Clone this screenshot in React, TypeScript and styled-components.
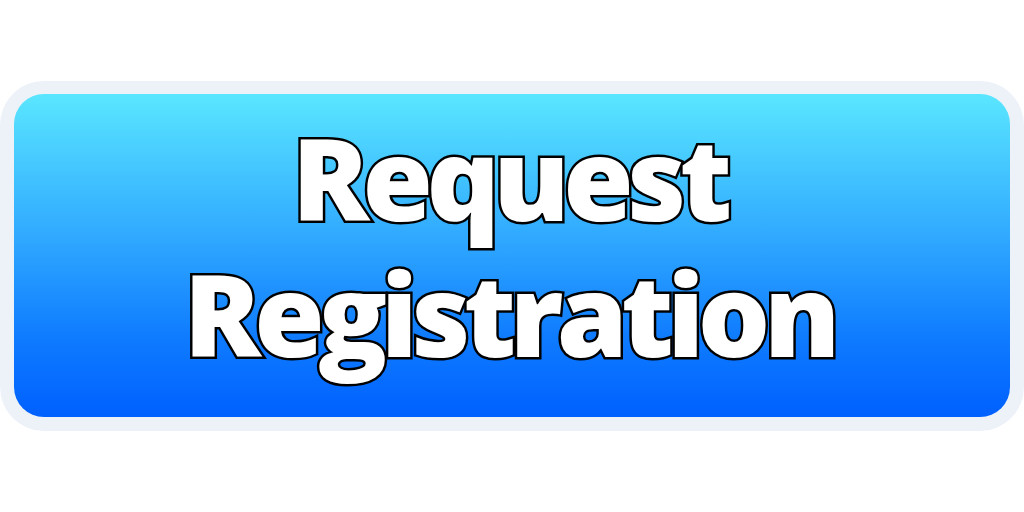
import styled, { createGlobalStyle } from 'styled-components';

const GlobalStyle = createGlobalStyle`
  html, body {
    margin: 0;
    padding: 0;
    background: #ffffff;
  }
  #root {
    width: 1024px;
    height: 512px;
  }
`;

const Page = styled.div`
  width: 1024px;
  height: 512px;
  display: flex;
  align-items: flex-start;
  justify-content: center;
  padding-top: 81px;
  box-sizing: border-box;
`;

const Frame = styled.div`
  width: 1024px;
  height: 350px;
  box-sizing: border-box;
  padding: 13px 14px 14px 14px;
  background: #edf2f9;
  border-radius: 44px;
  display: flex;
`;

const Button = styled.button`
  flex: 1;
  border: none;
  border-radius: 30px;
  background: linear-gradient(180deg, #5ae6ff 0%, #2fa8ff 45%, #0f7cff 75%, #0060ff 100%);
  display: flex;
  flex-direction: column;
  align-items: center;
  justify-content: center;
  gap: 16px;
  padding: 0 0 22px 0;
  cursor: pointer;
`;

const Label = styled.span`
  font-family: 'Open Sans', 'Noto Sans', sans-serif;
  font-weight: 800;
  font-size: 114px;
  line-height: 120px;
  letter-spacing: -6.5px;
  margin-right: 6.5px;
  color: #ffffff;
  -webkit-text-stroke: 5px #000000;
  paint-order: stroke fill;
`;

export default function App() {
  return (
    <>
      <GlobalStyle />
      <Page>
        <Frame>
          <Button type="button">
            <Label>Request</Label>
            <Label>Registration</Label>
          </Button>
        </Frame>
      </Page>
    </>
  );
}
